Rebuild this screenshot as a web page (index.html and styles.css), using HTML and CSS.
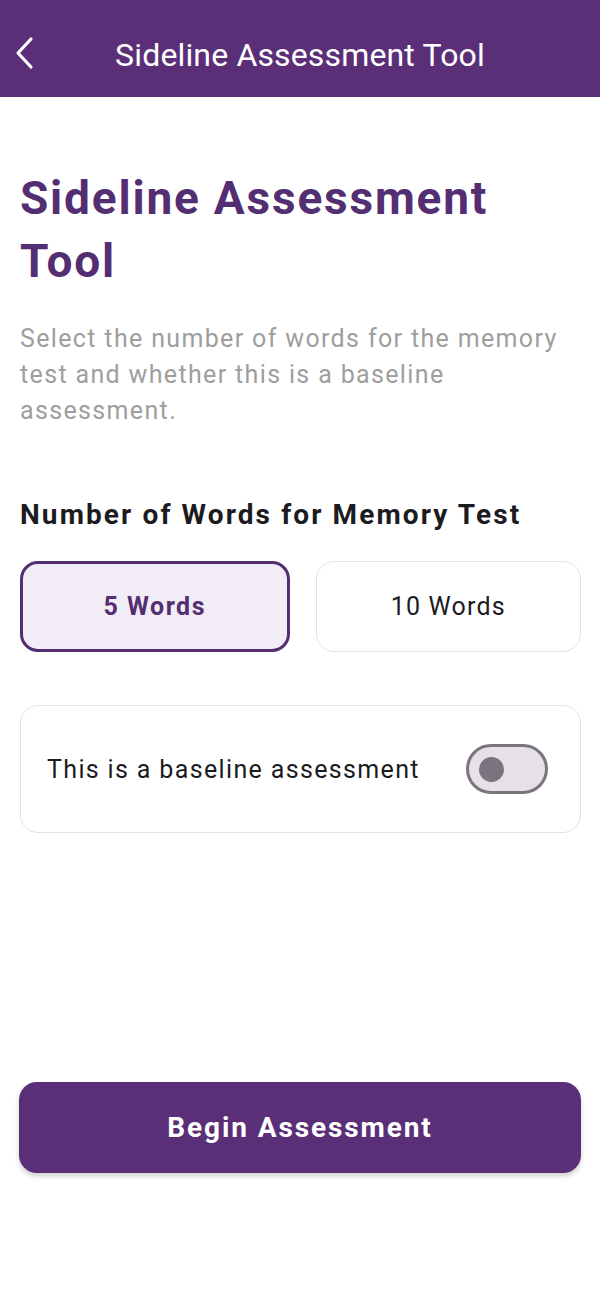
FILE: index.html
```html
<!DOCTYPE html>
<html lang="en">

<head>
    <meta charset="UTF-8">
    <meta name="viewport" content="width=device-width, initial-scale=1.0">
    <title>Sideline Assessment Tool</title>
    <link rel="stylesheet" href="styles.css">
</head>

<body>
    <header class="top-bar">
        <button class="back-button" aria-label="Back">
            <svg width="22" height="34" viewBox="0 0 22 34">
                <path d="M17 3 L4 17 L17 31" fill="none" stroke="#fff" stroke-width="3.2" stroke-linecap="round" stroke-linejoin="round" />
            </svg>
        </button>
        <h1 class="top-title">Sideline Assessment Tool</h1>
    </header>

    <main class="content">
        <h2 class="page-title">Sideline Assessment Tool</h2>
        <p class="intro">Select the number of words for the memory test and whether this is a baseline assessment.</p>

        <h3 class="section-title">Number of Words for Memory Test</h3>
        <div class="word-options">
            <button class="word-option selected">5 Words</button>
            <button class="word-option">10 Words</button>
        </div>

        <div class="baseline-card">
            <span class="baseline-label">This is a baseline assessment</span>
            <span class="switch"><span class="switch-thumb"></span></span>
        </div>

        <div class="spacer"></div>

        <button class="begin-button">Begin Assessment</button>
    </main>
</body>

</html>
```

FILE: styles.css
```css
body {
    margin: 0;
    font-family: Roboto, "Noto Sans", sans-serif;
    background-color: #ffffff;
    height: 1298px;
    display: flex;
    flex-direction: column;
}

.top-bar {
    height: 97px;
    flex-shrink: 0;
    background: #5a2f78;
    display: flex;
    align-items: center;
    position: relative;
}

.back-button {
    background: none;
    border: none;
    padding: 0;
    margin: 9px 0 0 14px;
    display: flex;
}

.top-title {
    position: absolute;
    top: 36px;
    left: 0;
    right: 0;
    text-align: center;
    margin: 0;
    color: #ffffff;
    font-size: 32px;
    font-weight: 400;
    line-height: normal;
    letter-spacing: 0.15px;
    pointer-events: none;
}

.content {
    flex: 1;
    display: flex;
    flex-direction: column;
    padding: 0 19px 0 20px;
}

.page-title {
    margin: 70px 0 0;
    color: #542e72;
    font-size: 46px;
    font-weight: 700;
    line-height: 63px;
    letter-spacing: 1.8px;
}

.intro {
    margin: 28px 0 0;
    color: #9e9e9e;
    font-size: 25px;
    line-height: 36px;
    letter-spacing: 1.35px;
}

.section-title {
    margin: 68px 0 0;
    color: #1c1b1f;
    font-size: 28px;
    font-weight: 700;
    line-height: 36px;
    letter-spacing: 2.1px;
}

.word-options {
    display: flex;
    gap: 26px;
    margin-top: 28px;
}

.word-option {
    flex: 1;
    min-width: 0;
    height: 91px;
    border: 1.5px solid #e2e2e2;
    border-radius: 18px;
    background: #ffffff;
    font-family: inherit;
    font-size: 25px;
    color: #1c1b1f;
    letter-spacing: 1.2px;
}

.word-option.selected {
    border: 3px solid #542e72;
    background: #f2ecf6;
    color: #542e72;
    font-weight: 700;
    letter-spacing: 1.5px;
}

.baseline-card {
    margin-top: 53px;
    height: 128px;
    border: 1.5px solid #e2e2e2;
    border-radius: 18px;
    display: flex;
    align-items: center;
    justify-content: space-between;
    padding: 0 32px 0 26px;
    box-sizing: border-box;
}

.baseline-label {
    font-size: 25px;
    color: #1c1b1f;
    letter-spacing: 1.35px;
}

.switch {
    width: 82px;
    height: 50px;
    border: 3px solid #79747e;
    border-radius: 25px;
    background: #e6e0e9;
    box-sizing: border-box;
    display: flex;
    align-items: center;
    padding-left: 10px;
}

.switch-thumb {
    width: 25px;
    height: 25px;
    border-radius: 50%;
    background: #79747e;
}

.spacer {
    flex: 1;
}

.begin-button {
    height: 91px;
    flex-shrink: 0;
    margin: 0 0 125px -1px;
    border: none;
    border-radius: 18px;
    background: #5a2f78;
    color: #ffffff;
    font-family: inherit;
    font-size: 28px;
    font-weight: 700;
    letter-spacing: 1.9px;
    box-shadow: 0 3px 5px rgba(0, 0, 0, 0.2);
}
```
